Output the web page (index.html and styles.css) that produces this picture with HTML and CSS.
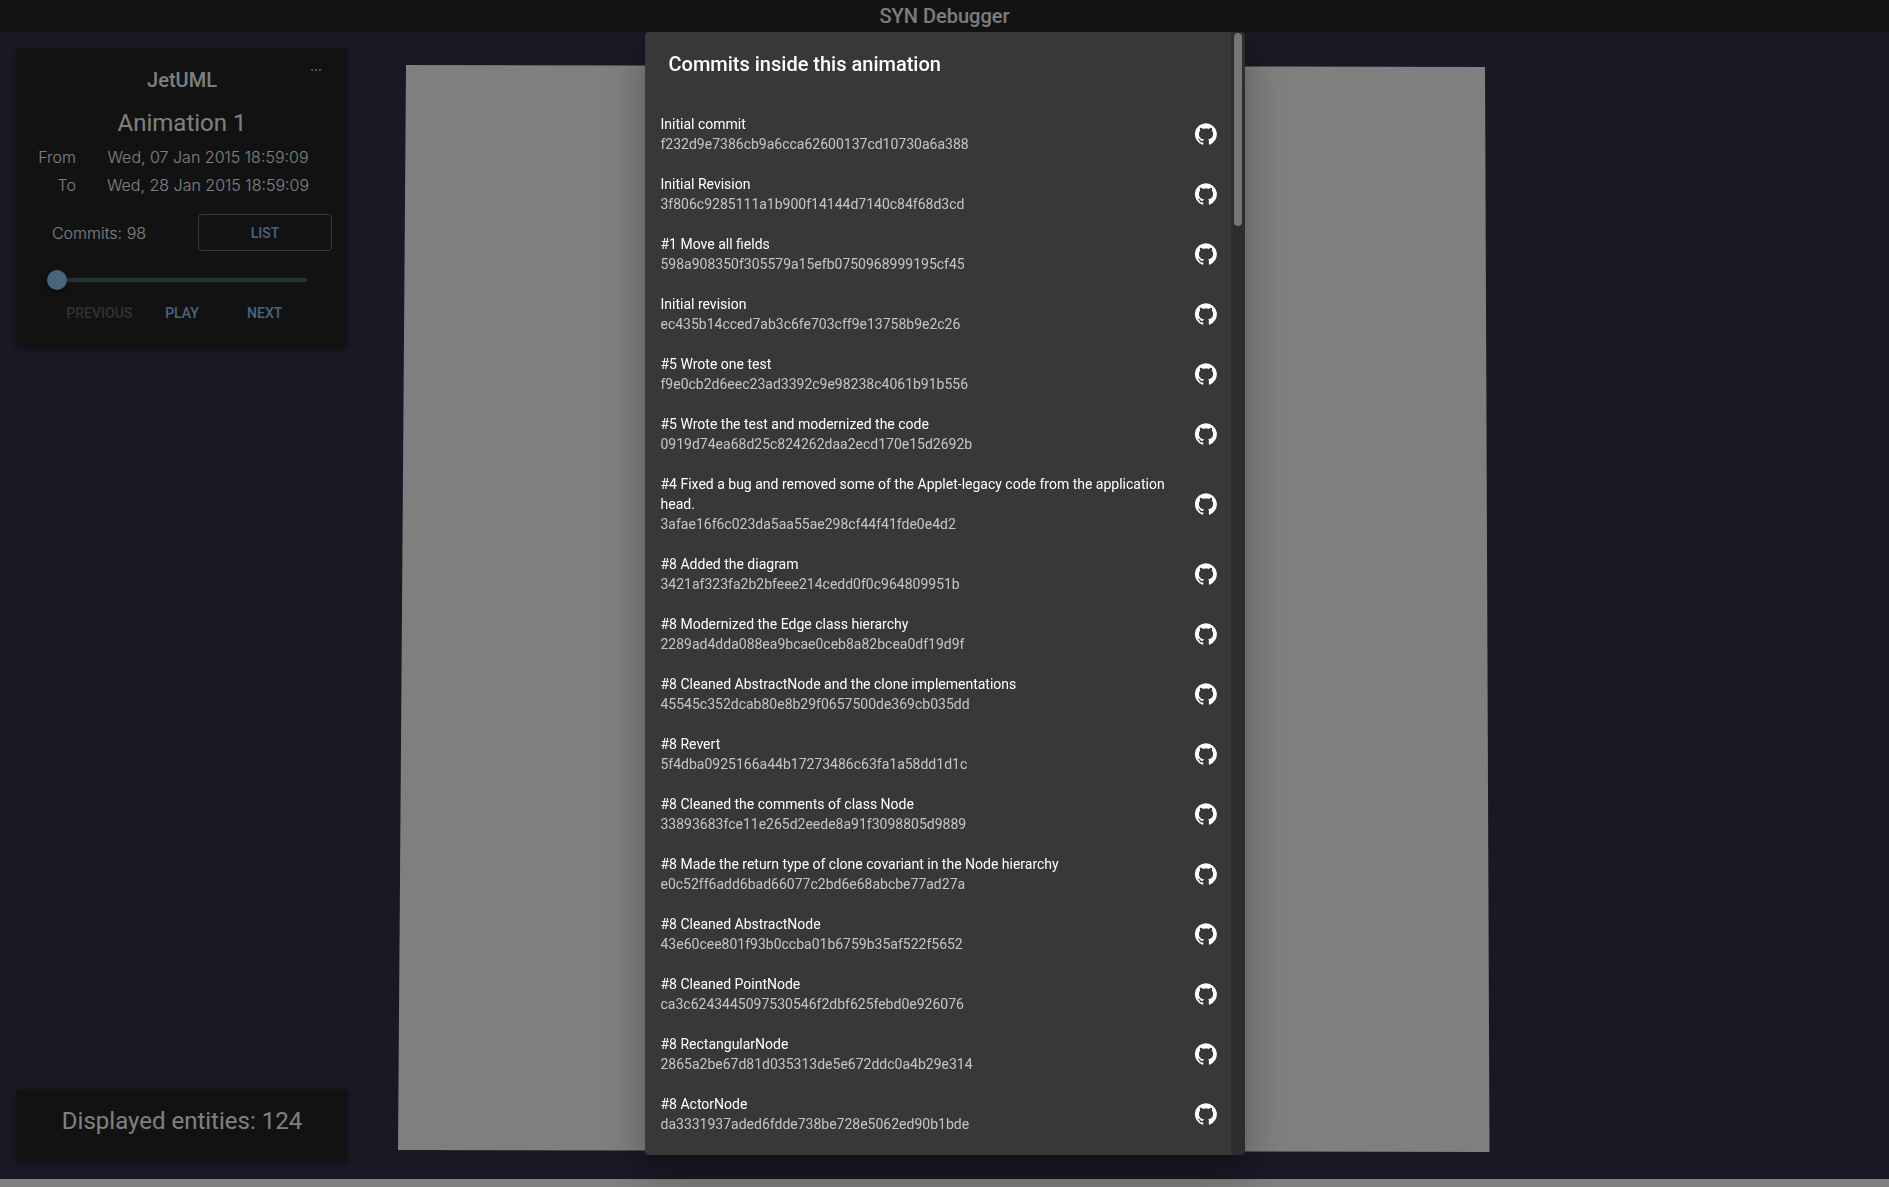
FILE: index.html
```html
<!DOCTYPE html>
<html lang="en">
<head>
<meta charset="utf-8">
<title>SYN Debugger</title>
<meta name="viewport" content="width=device-width, initial-scale=1">
<link rel="stylesheet" href="styles.css">
</head>
<body>
<div class="app">
  <header class="app-bar"><h1 class="app-title">SYN Debugger</h1></header>
  <main class="stage">
    <svg class="canvas" viewBox="0 0 1889 1147" preserveAspectRatio="none" aria-hidden="true">
      <polygon points="406,33 1485,35 1489.500,1120 398,1118" fill="#fff"/>
    </svg>
    <div class="sidebar">
      <section class="card controls">
        <button class="more" type="button" aria-label="More">...</button>
        <h2 class="project">JetUML</h2>
        <p class="animation">Animation 1</p>
        <dl class="range">
          <dt>From</dt><dd>Wed, 07 Jan 2015 18:59:09</dd>
          <dt>To</dt><dd>Wed, 28 Jan 2015 18:59:09</dd>
        </dl>
        <div class="commit-count">
          <span>Commits: 98</span>
          <button class="btn btn-outlined" type="button">LIST</button>
        </div>
        <input class="slider" type="range" min="0" max="98" value="0" aria-label="Frame">
        <div class="playback">
          <button class="btn" type="button" disabled>PREVIOUS</button>
          <button class="btn" type="button">PLAY</button>
          <button class="btn" type="button">NEXT</button>
        </div>
      </section>
      <section class="card entities"><p>Displayed entities: 124</p></section>
    </div>
  </main>
</div>

<div class="backdrop">
  <div class="dialog" role="dialog" aria-modal="true" aria-labelledby="dialog-title">
    <div class="dialog-body">
      <h2 class="dialog-title" id="dialog-title">Commits inside this animation</h2>
      <ul class="commits" id="commits"></ul>
    </div>
    <div class="scrollbar"><div class="scroll-thumb"></div></div>
  </div>
</div>

<template id="commit-row">
  <li class="commit">
    <div class="commit-text"><p class="message"></p><p class="hash"></p></div>
    <a class="github" href="#" aria-label="View on GitHub">
      <svg viewBox="0 0 24 24" width="24" height="24" fill="currentColor"><path d="M12 1.27a11 11 0 00-3.48 21.46c.55.09.73-.28.73-.55v-1.84c-3.03.64-3.67-1.46-3.67-1.46-.55-1.29-1.28-1.65-1.28-1.65-.92-.65.1-.65.1-.65 1.1 0 1.73 1.1 1.73 1.1.92 1.65 2.57 1.2 3.21.92a2 2 0 01.64-1.47c-2.47-.27-5.04-1.19-5.04-5.5 0-1.1.46-2.1 1.2-2.84a3.76 3.76 0 010-2.93s.91-.28 3.11 1.1c1.8-.49 3.7-.49 5.5 0 2.1-1.38 3.02-1.1 3.02-1.1a3.76 3.76 0 01.1 2.83c.74.74 1.2 1.74 1.2 2.94 0 4.21-2.57 5.13-5.04 5.4.45.37.82.92.82 2.02v3.03c0 .27.1.64.73.55A11 11 0 0012 1.27"/></svg>
    </a>
  </li>
</template>
<script src="app.js"></script>
</body>
</html>
```

FILE: styles.css
```css
* { box-sizing: border-box; }

body {
  margin: 0;
  background: #fff;
  color: #fff;
  font-family: Roboto, "Liberation Sans", sans-serif;
  font-size: 16px;
  line-height: 24px;
  overflow: hidden;
}

h1, h2, p, ul, dl, dd { margin: 0; padding: 0; }

.app {
  display: flex;
  flex-direction: column;
  height: 100vh;
  padding-bottom: 8px;
}

.app-bar {
  height: 32px;
  background: #272727;
  text-align: center;
}

.app-title {
  font-size: 20px;
  font-weight: 500;
  line-height: 32px;
}

.stage {
  position: relative;
  flex: 1;
  display: flex;
  background: #33334c;
}

.canvas {
  position: absolute;
  inset: 0;
  width: 100%;
  height: 100%;
}

.sidebar {
  position: relative;
  display: flex;
  flex-direction: column;
  justify-content: space-between;
  width: 364px;
  padding: 16px 16px 18px;
}

.card {
  position: relative;
  border-radius: 4px;
  background: #242424;
  box-shadow: 0 2px 4px -1px rgba(0, 0, 0, .2), 0 4px 5px rgba(0, 0, 0, .14), 0 1px 10px rgba(0, 0, 0, .12);
  text-align: center;
}

.controls { padding: 16px; }

.more {
  position: absolute;
  top: 6px;
  right: 16px;
  width: 32px;
  padding: 0;
  border: 0;
  background: none;
  color: #90caf9;
  font: 500 14px/24px Roboto, sans-serif;
}

.project {
  font-size: 20px;
  font-weight: 500;
  line-height: 32px;
}

.animation {
  margin-top: 11px;
  font-size: 24px;
  line-height: 32px;
}

.range,
.commit-count {
  font-family: Inter, Roboto, sans-serif;
  font-weight: 300;
}

.range {
  display: grid;
  grid-template-columns: 44px 1fr;
  gap: 4px 8px;
  margin-top: 6px;
}

.range dt { text-align: right; }

.commit-count {
  display: grid;
  grid-template-columns: 1fr 1fr;
  align-items: center;
  gap: 32px;
  margin-top: 17px;
}

.btn {
  height: 37px;
  padding: 0;
  border: 0;
  border-radius: 4px;
  background: none;
  color: #90caf9;
  font: 500 14px/24px Roboto, sans-serif;
}

.btn:disabled { color: #666; }

.btn-outlined { border: 1px solid rgba(144, 202, 249, .5); }

.slider {
  display: block;
  width: calc(100% - 40px);
  height: 20px;
  margin: 19px 0 0 15px;
  appearance: none;
  background: none;
}

.slider::-webkit-slider-runnable-track {
  height: 4px;
  border-radius: 2px;
  background: #4d626f;
}

.slider::-webkit-slider-thumb {
  appearance: none;
  width: 20px;
  height: 20px;
  margin-top: -8px;
  border-radius: 50%;
  background: #90caf9;
  box-shadow: 0 2px 4px rgba(0, 0, 0, .4);
}

.playback {
  display: grid;
  grid-template-columns: repeat(3, 1fr);
  margin: 4px 26px 0;
}

.entities {
  padding: 16px;
  height: 72px;
  font-size: 24px;
  line-height: 32px;
}

.backdrop {
  position: fixed;
  inset: 0;
  display: flex;
  justify-content: center;
  padding: 32px;
  background: rgba(0, 0, 0, .5);
}

.dialog {
  display: flex;
  width: 600px;
  overflow: hidden;
  border-radius: 4px;
  background: #383838;
  box-shadow: 0 11px 15px -7px rgba(0, 0, 0, .2), 0 24px 38px 3px rgba(0, 0, 0, .14), 0 9px 46px 8px rgba(0, 0, 0, .12);
}

.dialog-body {
  flex: 1;
  overflow: hidden;
}

.dialog-title {
  padding: 16px 24px;
  font-size: 20px;
  font-weight: 500;
  line-height: 32px;
}

.commits {
  padding: 8px 0;
  list-style: none;
}

.commit {
  display: flex;
  align-items: center;
  gap: 4px;
  padding: 10px 13px 10px 16px;
  font-size: 14px;
  line-height: 20px;
}

.commit-text { flex: 1; }

.hash { color: rgba(255, 255, 255, .7); }

.github {
  display: flex;
  height: 24px;
  color: #fff;
}

.scrollbar {
  width: 14px;
  padding: 1px 3px;
  background: #2d2d2d;
}

.scroll-thumb {
  width: 8px;
  height: 193px;
  border-radius: 4px;
  background: #757575;
}
```

FILE: app.js
```js
const commits = [
  ["Initial commit", "f232d9e7386cb9a6cca62600137cd10730a6a388"],
  ["Initial Revision", "3f806c9285111a1b900f14144d7140c84f68d3cd"],
  ["#1 Move all fields", "598a908350f305579a15efb0750968999195cf45"],
  ["Initial revision", "ec435b14cced7ab3c6fe703cff9e13758b9e2c26"],
  ["#5 Wrote one test", "f9e0cb2d6eec23ad3392c9e98238c4061b91b556"],
  ["#5 Wrote the test and modernized the code", "0919d74ea68d25c824262daa2ecd170e15d2692b"],
  ["#4 Fixed a bug and removed some of the Applet-legacy code from the application head.", "3afae16f6c023da5aa55ae298cf44f41fde0e4d2"],
  ["#8 Added the diagram", "3421af323fa2b2bfeee214cedd0f0c964809951b"],
  ["#8 Modernized the Edge class hierarchy", "2289ad4dda088ea9bcae0ceb8a82bcea0df19d9f"],
  ["#8 Cleaned AbstractNode and the clone implementations", "45545c352dcab80e8b29f0657500de369cb035dd"],
  ["#8 Revert", "5f4dba0925166a44b17273486c63fa1a58dd1d1c"],
  ["#8 Cleaned the comments of class Node", "33893683fce11e265d2eede8a91f3098805d9889"],
  ["#8 Made the return type of clone covariant in the Node hierarchy", "e0c52ff6add6bad66077c2bd6e68abcbe77ad27a"],
  ["#8 Cleaned AbstractNode", "43e60cee801f93b0ccba01b6759b35af522f5652"],
  ["#8 Cleaned PointNode", "ca3c6243445097530546f2dbf625febd0e926076"],
  ["#8 RectangularNode", "2865a2be67d81d035313de5e672ddc0a4b29e314"],
  ["#8 ActorNode", "da3331937aded6fdde738be728e5062ed90b1bde"]
];

const list = document.getElementById("commits");
const template = document.getElementById("commit-row");

for (const [message, hash] of commits) {
  const row = template.content.cloneNode(true);
  row.querySelector(".message").textContent = message;
  row.querySelector(".hash").textContent = hash;
  list.append(row);
}
```
